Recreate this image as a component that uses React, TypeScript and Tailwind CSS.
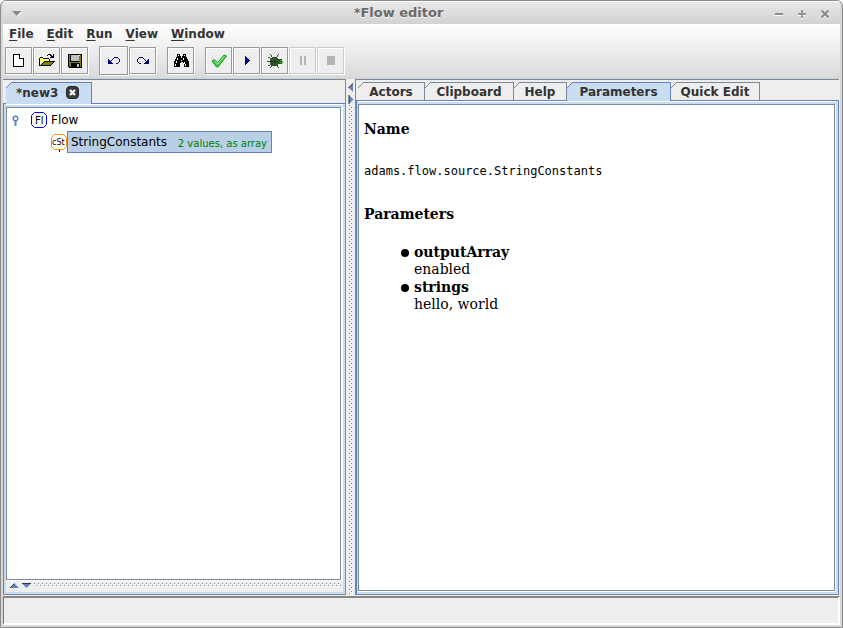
import type { ReactNode } from 'react';

const menus = ['File', 'Edit', 'Run', 'View', 'Window'];

const parameters = [
  { name: 'outputArray', value: 'enabled' },
  { name: 'strings', value: 'hello, world' },
];

type ToolProps = { label: string; disabled?: boolean; big?: boolean; children: ReactNode };

function Tool({ label, disabled = false, big = false, children }: ToolProps) {
  return (
    <button
      type="button"
      aria-label={label}
      disabled={disabled}
      className={`flex shrink-0 items-center justify-center border bg-[#eeeeee] shadow-[1px_1px_0_#ffffff,inset_1px_1px_0_#ffffff] ${big ? 'size-[29px]' : 'size-[27px]'} ${disabled ? 'border-[#cccccc]' : 'border-[#999999]'}`}
    >
      <svg width="17" height="17" viewBox="0 0 17 17" shapeRendering="crispEdges" aria-hidden="true">
        {children}
      </svg>
    </button>
  );
}

function Tab({ label, active = false, className }: { label: string; active?: boolean; className: string }) {
  return (
    <button
      type="button"
      role="tab"
      aria-selected={active}
      className={`relative flex shrink-0 items-center justify-center border-t border-r font-bold ${active ? 'z-10 -mb-px border-[#6382bf] bg-[#c8ddf2] pb-px' : 'border-[#7a8a99] bg-[#eeeeee]'} ${className}`}
    >
      <svg className="absolute -top-px left-0" width="6" height="6" viewBox="0 0 6 6" aria-hidden="true">
        <path d="M0 0H6L0 6Z" fill="#eeeeee" />
        <path d="M0 6L6 0" stroke={active ? '#6382bf' : '#7a8a99'} />
      </svg>
      {label}
    </button>
  );
}

function Dots({ vertical = false }: { vertical?: boolean }) {
  const id = vertical ? 'dots-v' : 'dots-h';
  return (
    <svg className="h-full w-full" shapeRendering="crispEdges" aria-hidden="true">
      <defs>
        <pattern id={id} width="4" height="4" patternUnits="userSpaceOnUse">
          <rect x="0" y="0" width="1" height="1" fill="#7a8a99" />
          <rect x="2" y="2" width="1" height="1" fill="#7a8a99" />
          <rect x="1" y="1" width="1" height="1" fill="#ffffff" />
          <rect x="3" y="3" width="1" height="1" fill="#ffffff" />
        </pattern>
      </defs>
      <rect width="100%" height="100%" fill={`url(#${id})`} />
    </svg>
  );
}

function Undo() {
  return (
    <g fill="#000080">
      <path d="M3 7h1v1h1v1h1v1h1v1h1v1H3z" />
      <path d="M6 8h1v1H6zM7 7h1v1H7zM8 6h1v1H8zM9 5h4v1H9zM13 6h1v1h-1zM14 7h1v3h-1zM13 10h1v1h-1zM11 11h2v1h-2z" />
    </g>
  );
}

export default function App() {
  return (
    <div className="flex h-screen flex-col overflow-hidden rounded-t-md border border-[#8b8b8b] bg-[#d8d8d8] px-[2px] pb-[2px] font-['DejaVu_Sans',sans-serif] text-[12px] text-[#333333]">
      <header className="flex h-[23px] shrink-0 items-center border-t border-white bg-linear-to-b from-[#e8e8e8] to-[#d2d2d2]">
        <button type="button" aria-label="Window menu" className="flex w-[36px] pl-[9px]">
          <svg width="10" height="7" viewBox="0 0 10 7" aria-hidden="true">
            <path d="M1 2h9L5.500 7z" fill="#fff" />
            <path d="M0 1h9.500L4.700 6z" fill="#8b8b8b" />
          </svg>
        </button>
        <h1 className="flex-1 text-center text-[13px] font-bold text-[#6a6a6a] [text-shadow:0_1px_0_#f4f4f4]">*Flow editor</h1>
        <div className="flex w-[82px] justify-end gap-[13px] pt-px pr-[10px]">
          <button type="button" aria-label="Minimize">
            <svg width="10" height="10" viewBox="0 0 10 10" aria-hidden="true">
              <path d="M1 6h8" stroke="#fff" strokeWidth="2" />
              <path d="M1 5h8" stroke="#8b8b8b" strokeWidth="2" />
            </svg>
          </button>
          <button type="button" aria-label="Maximize">
            <svg width="10" height="10" viewBox="0 0 10 10" aria-hidden="true">
              <path d="M1 6h8M5 2v8" stroke="#fff" strokeWidth="2" />
              <path d="M1 5h8M5 1v8" stroke="#959595" strokeWidth="2" />
            </svg>
          </button>
          <button type="button" aria-label="Close">
            <svg width="10" height="10" viewBox="0 0 10 10" aria-hidden="true">
              <path d="M1.500 2.500l7 7M8.500 2.500l-7 7" stroke="#fff" strokeWidth="2" />
              <path d="M1.500 1.500l7 7M8.500 1.500l-7 7" stroke="#8b8b8b" strokeWidth="2.200" />
            </svg>
          </button>
        </div>
      </header>

      <div className="flex min-h-0 flex-1 flex-col bg-[#eeeeee]">
        <div className="flex h-[55px] shrink-0 flex-col border-b border-[#d0d0d0] bg-linear-to-b from-white to-[#dadada]">
          <nav className="flex h-[22px] items-center gap-[13px] pb-[3px] pl-[6px] font-bold">
            {menus.map((menu) => (
              <button key={menu} type="button">
                <span className="underline decoration-1 underline-offset-2">{menu[0]}</span>
                {menu.slice(1)}
              </button>
            ))}
          </nav>
          <div role="toolbar" aria-label="Flow actions" className="flex h-[29px] items-center gap-[11px] pl-[2px]">
            <div className="flex items-center gap-px">
              <Tool label="New">
                <path d="M3 2h7v1h1v1h1v1h1v1h1v9H3z" fill="#000" />
                <path d="M4 3h6v4h3v7H4z" fill="#fff" />
                <path d="M10 3h1v1h1v1h1v1h-3z" fill="#fff" />
                <path d="M9 3h1v3h3v1H9z" fill="#000" />
              </Tool>
              <Tool label="Open">
                <path d="M2 5h3v1h6v1h1v3H7v1H6v1H5v1H4v1H1V6h1z" fill="#000" />
                <path d="M2 6h3v1h6v2H6v1H5v1H4v1H3v1H2z" fill="#ffff66" />
                <path d="M3 7h1v1H3zM5 7h1v1H5zM7 8h1v1H7zM9 7h1v1H9zM3 9h1v1H3zM2 11h1v1H2z" fill="#fff" />
                <path d="M6 9h11v1h-1v1h-1v1h-1v1h-1v1H2v-1h1v-1h1v-1h1v-1h1z" fill="#000" />
                <path d="M6 10h9v1h-1v1h-1v1H4v-1h1v-1h1z" fill="#808000" />
                <path d="M9 3h1v-1h3v1h1v1h1V2h1v4h-4V5h1V4h-1V3h-2v1H9z" fill="#000" />
              </Tool>
              <Tool label="Save">
                <path d="M2 2h14v14H3v-1H2z" fill="#000" />
                <path d="M3 3h12v12H4v-1H3z" fill="#808000" />
                <path d="M4 2h9v8H4z" fill="#000" />
                <path d="M5 3h8v6H5z" fill="#c0c0c0" />
                <path d="M13 3h1v1h-1z" fill="#fff" />
                <path d="M5 11h9v4H5z" fill="#000" />
                <path d="M11 12h2v3h-2z" fill="#c0c0c0" />
              </Tool>
            </div>
            <div className="flex items-center gap-px">
              <Tool label="Undo" big>
                <Undo />
              </Tool>
              <Tool label="Redo">
                <g transform="translate(18 0) scale(-1 1)">
                  <Undo />
                </g>
              </Tool>
            </div>
            <Tool label="Find">
              <path d="M5 2h3v2h1v2h1V4h1V2h3v3h1v2h1v2h1v6h-5v-4h-1v-1H9v1H8v4H2V9h1V7h1V5h1z" fill="#000" />
              <path d="M6 3h1v1H6zM5 6h1v2H5zM4 9h1v2H4zM3 12h1v2H3zM12 3h1v1h-1zM11 6h1v2h-1zM12 10h1v2h-1zM13 12h1v2h-1zM9 8h1v1H9z" fill="#fff" />
            </Tool>
            <div className="flex items-center gap-px">
              <Tool label="Check">
                <g shapeRendering="auto">
                  <path d="M2 9L4 7.500L7.500 10.500L14 3L16.500 4L8 15H6.500Z" fill="#42cf45" stroke="#249329" strokeLinejoin="round" />
                  <path d="M4 8.500L7.500 12L14.500 4" fill="none" stroke="#a2eda2" />
                </g>
              </Tool>
              <Tool label="Run">
                <path d="M7 4h1v1h1v1h1v1h1v1h1v1h-1v1h-1v1H9v1H8v1H7z" fill="#000080" />
              </Tool>
              <Tool label="Debug">
                <path d="M4 2h1v1h1v2h1v1H6V5H5V3H4zM13 2h-1v1h-1v2h-1v1h1V5h1V3h1zM2 5h2v1h1v1H4V6H2zM1 9h4v1H1zM2 13h2v-1h2v1H4v1H2zM4 16v-1h1v-2h1v2H5v1zM13 16v-1h-1v-2h-1v2h1v1z" fill="#33502f" />
                <path d="M6 5h5v1h1v1h1v5h-1v1h-1v1H6v-1H5v-1H4V7h1V6h1z" fill="#33522f" />
                <path d="M13 7h3v1h1v3h-1v1h-3z" fill="#33522f" />
                <path d="M5 9h2v1H5zM8 9h2v1H8zM11 9h1v1h-1z" fill="#122612" />
                <path d="M14 8h2v1h-2zM14 10h2v1h-2z" fill="#48a33c" />
                <path d="M16 8h1v2h-1z" fill="#80ff60" />
              </Tool>
              <Tool label="Pause" disabled>
                <path d="M6 4h2v9H6zM10 4h2v9h-2z" fill="#b4b4b4" />
              </Tool>
              <Tool label="Stop" disabled>
                <path d="M5 4h8v9H5z" fill="#b4b4b4" />
              </Tool>
            </div>
          </div>
        </div>

        <main className="flex min-h-0 flex-1 pr-[1px]">
          <section className="flex w-[343px] shrink-0 flex-col border-t border-r border-[#7a8a99]">
            <div role="tablist" className="flex h-[24px] shrink-0 border-b border-[#6382bf] pt-[2px] pl-[3px]">
              <div className="relative z-10 -mb-px flex w-[86px] items-center gap-[8px] border-r border-t border-[#6382bf] bg-[#c8ddf2] pb-[2px] pl-[10px]">
                <svg className="absolute -top-px left-0" width="6" height="6" viewBox="0 0 6 6" aria-hidden="true">
                  <path d="M0 0H6L0 6Z" fill="#eeeeee" />
                  <path d="M0 6L6 0" stroke="#6382bf" />
                </svg>
                <button type="button" role="tab" aria-selected className="font-bold">*new3</button>
                <button type="button" aria-label="Close new3">
                  <svg width="13" height="13" viewBox="0 0 13 13" aria-hidden="true">
                    <rect x="0.500" y="0.500" width="12" height="12" rx="3.500" fill="#3c3c3c" stroke="#222" />
                    <path d="M4 4l5 5M9 4l-5 5" stroke="#fff" strokeWidth="2.200" />
                  </svg>
                </button>
              </div>
            </div>
            <div className="flex min-h-0 flex-1 flex-col border-b border-l border-b-[#7a8a99] border-l-[#6382bf] bg-[#c8ddf2] pr-[2px] pb-[2px] pl-[2px]">
              <div className="h-px shrink-0 bg-white" />
              <div className="mt-[2px] flex min-h-0 flex-1 flex-col bg-white pr-[2px] pb-px">
                <ul role="tree" className="flex-1 border border-[#7a8a99] pt-px text-black">
                  <li role="treeitem" aria-expanded>
                    <div className="flex h-[22px] items-center pl-[5px]">
                      <svg width="7" height="11" viewBox="0 0 7 11" className="mt-px mr-[12px]" aria-hidden="true">
                        <path d="M3.500 6v5" stroke="#6382bf" strokeWidth="2" />
                        <circle cx="3.500" cy="3.500" r="2.300" fill="#fff" stroke="#6382bf" strokeWidth="1.500" />
                      </svg>
                      <svg width="16" height="16" viewBox="0 0 16 16" className="mr-[4px]" aria-hidden="true">
                        <path d="M3.500 .5h9l3 3v9l-3 3h-9l-3-3v-9z" fill="#fff" stroke="#0000e6" />
                        <text x="4" y="12" fontSize="10">Fl</text>
                      </svg>
                      Flow
                    </div>
                    <ul role="group">
                      <li role="treeitem" aria-selected className="flex h-[22px] items-center pl-[44px]">
                        <svg width="16" height="20" viewBox="0 0 16 20" className="mt-px" aria-hidden="true">
                          <path d="M3.500 1.500h9l3 3v9l-3 3h-9l-3-3v-9z" fill="#fff" stroke="#ff8c00" />
                          <path d="M8.500 17v2" stroke="#000" />
                          <text x="1" y="12" fontSize="8">cSt</text>
                        </svg>
                        <span className="flex h-[22px] w-[205px] items-center justify-between border border-[#6382bf] bg-[#b8cfe5] pr-[4px] pl-[3px]">
                          StringConstants
                          <span className="pt-[2px] text-[10px] text-[#008000]">2 values, as array</span>
                        </span>
                      </li>
                    </ul>
                  </li>
                </ul>
              </div>
              <div className="flex h-[11px] shrink-0 bg-[#eeeeee] pt-[2px]">
                <svg width="24" height="6" viewBox="0 0 24 6" className="ml-[4px] shrink-0" aria-hidden="true">
                  <path d="M0 5L4.500 .5L9 5Z" fill="#6382bf" />
                  <path d="M0 5L4.500 .5" stroke="#333" />
                  <path d="M12 .5H21L16.500 5Z" fill="#6382bf" />
                  <path d="M12 .5H21" stroke="#333" />
                </svg>
                <div className="mr-[2px] h-[4px] flex-1">
                  <Dots />
                </div>
              </div>
            </div>
          </section>

          <div className="flex w-[9px] shrink-0 flex-col items-center pt-[4px]">
            <svg width="6" height="22" viewBox="0 0 6 22" className="shrink-0" aria-hidden="true">
              <path d="M5 0V9L.5 4.500Z" fill="#6382bf" />
              <path d="M5 .5L.5 5" stroke="#333" />
              <path d="M1 12V21L5.500 16.500Z" fill="#6382bf" />
              <path d="M1 12V21" stroke="#333" />
            </svg>
            <div className="ml-px w-[4px] flex-1">
              <Dots vertical />
            </div>
          </div>

          <section className="flex min-w-0 flex-1 flex-col border-t border-l border-[#7a8a99]">
            <div role="tablist" className="flex h-[21px] shrink-0 border-b border-[#6382bf] pt-[2px] pl-[2px]">
              <Tab label="Actors" className="w-[67px]" />
              <Tab label="Clipboard" className="w-[89px]" />
              <Tab label="Help" className="w-[53px]" />
              <Tab label="Parameters" active className="w-[104px]" />
              <Tab label="Quick Edit" className="w-[89px]" />
            </div>
            <div className="flex min-h-0 flex-1 flex-col border-x border-b border-x-[#6382bf] border-b-[#7a8a99] bg-[#c8ddf2] pr-[2px] pb-[2px] pl-px">
              <div className="h-px shrink-0 bg-white" />
              <div className="mt-[2px] flex min-h-0 flex-1 flex-col bg-white pr-px pb-px">
                <article className="flex-1 border border-[#7a8a99] px-[5px] pt-[16px] font-['DejaVu_Serif',serif] text-[14px] leading-[17px] text-black">
                  <h2 className="font-bold">Name</h2>
                  <p className="mt-[25px] font-['DejaVu_Sans_Mono',monospace] text-[12px]">adams.flow.source.StringConstants</p>
                  <h2 className="mt-[26px] font-bold">Parameters</h2>
                  <ul className="mt-[21px] flex flex-col gap-px">
                    {parameters.map((parameter) => (
                      <li key={parameter.name} className="flex gap-[5px] pl-[37px]">
                        <span className="mt-[5px] size-[8px] rounded-full bg-black" />
                        <div>
                          <h3 className="font-bold">{parameter.name}</h3>
                          <p>{parameter.value}</p>
                        </div>
                      </li>
                    ))}
                  </ul>
                </article>
              </div>
            </div>
          </section>
        </main>

        <footer className="mt-px h-[29px] shrink-0 border-t-2 border-r-2 border-b-2 border-l border-t-[#888888] border-r-white border-b-white border-l-[#777777] bg-[#eeeeee]" />
      </div>
    </div>
  );
}
